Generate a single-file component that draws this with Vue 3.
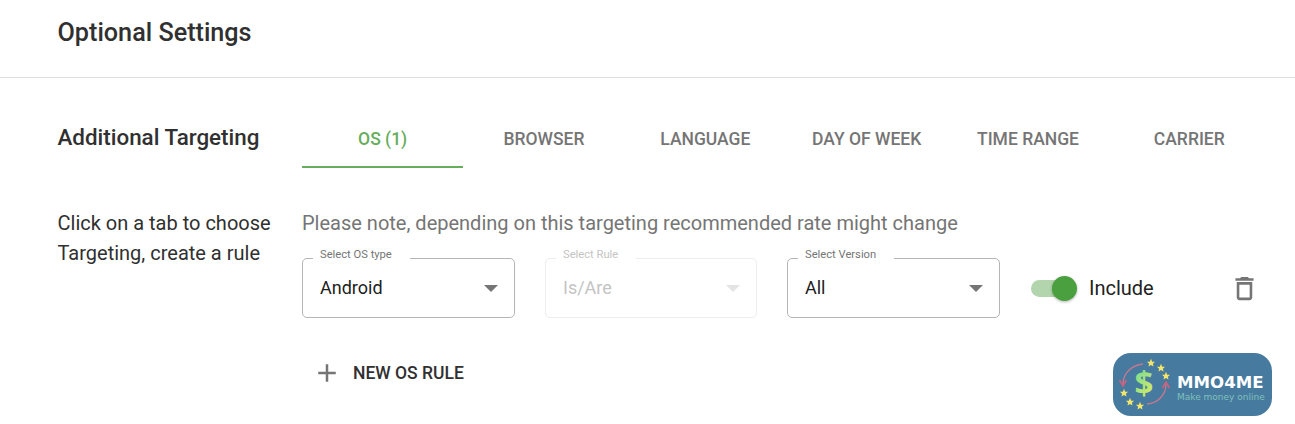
<script setup>
const tabs = ['OS (1)', 'BROWSER', 'LANGUAGE', 'DAY OF WEEK', 'TIME RANGE', 'CARRIER']
const stars = [
  [38, 10], [48, 15], [53, 23], [11, 40], [17, 49], [27, 53]
]
const starPath = 'M0 -4.2 L1.2 -1.3 L4.1 -1.2 L1.9 0.8 L2.5 3.6 L0 2.1 L-2.5 3.6 L-1.9 0.8 L-4.1 -1.2 L-1.2 -1.3 Z'
</script>

<template>
  <div class="page">
    <header class="head"><h2>Optional Settings</h2></header>
    <section class="body">
      <div class="row-top">
        <h3 class="side-title">Additional Targeting</h3>
        <nav class="tabs">
          <div v-for="(t, i) in tabs" :key="t" class="tab" :class="{ active: i === 0 }">{{ t }}</div>
        </nav>
      </div>
      <div class="row-main">
        <p class="side-text">Click on a tab to choose Targeting, create a rule</p>
        <div class="content">
          <p class="note">Please note, depending on this targeting recommended rate might change</p>
          <div class="rule">
            <div class="field">
              <span class="legend">Select OS type</span>
              <span class="value">Android</span>
              <span class="caret"></span>
            </div>
            <div class="field disabled">
              <span class="legend">Select Rule</span>
              <span class="value">Is/Are</span>
              <span class="caret"></span>
            </div>
            <div class="field">
              <span class="legend">Select Version</span>
              <span class="value">All</span>
              <span class="caret"></span>
            </div>
            <div class="switch-wrap">
              <span class="switch"><span class="track"></span><span class="thumb"></span></span>
              <span class="switch-label">Include</span>
            </div>
            <svg class="trash" viewBox="0 0 24 24" fill="#757575">
              <path d="M6 19c0 1.1.9 2 2 2h8c1.1 0 2-.9 2-2V7H6v12zM8 9h8v10H8V9zm7.5-5l-1-1h-5l-1 1H5v2h14V4h-3.5z" />
            </svg>
          </div>
          <button class="add" type="button">
            <svg width="30" height="30" viewBox="0 0 24 24" fill="#757575">
              <path d="M19 13h-6v6h-2v-6H5v-2h6V5h2v6h6v2z" />
            </svg>
            <span>NEW OS RULE</span>
          </button>
        </div>
      </div>
    </section>

    <div class="logo">
      <svg class="logo-mark" width="64" height="63" viewBox="0 0 64 63">
        <defs>
          <linearGradient id="dollar" x1="0" y1="0" x2="0.5" y2="1">
            <stop offset="0" stop-color="#62d9a4" />
            <stop offset="1" stop-color="#d8ea62" />
          </linearGradient>
        </defs>
        <path d="M30 11 C19 12 10 20 10 31" fill="none" stroke="#c4788f" stroke-width="1.4" />
        <path d="M6.500 27 L10 33 L13.500 27" fill="none" stroke="#d0607c" stroke-width="1.6" />
        <path d="M34 51 C45 50 53 42 53 31" fill="none" stroke="#c4788f" stroke-width="1.4" />
        <path d="M49.500 35 L53 29 L56.500 35" fill="none" stroke="#d0607c" stroke-width="1.6" />
        <g v-for="s in stars" :key="s[0]" :transform="`translate(${s[0]} ${s[1]})`">
          <path :d="starPath" fill="#f2e56b" />
        </g>
        <text x="31" y="42" class="dollar" fill="url(#dollar)">$</text>
      </svg>
      <div class="logo-text">
        <div class="logo-name">MMO4ME</div>
        <div class="logo-sub">Make money online</div>
      </div>
    </div>
  </div>
</template>

<style scoped>
.page {
  position: relative;
  width: 1295px;
  height: 424px;
  background: #fff;
  color: #212121;
  font-family: Roboto, "Liberation Sans", sans-serif;
  overflow: hidden;
}
.head {
  height: 77px;
  padding: 0 57.5px;
  display: flex;
  align-items: center;
  border-bottom: 1px solid #e0e0e0;
  box-sizing: content-box;
}
.head h2 {
  margin: -13px 0 0;
  font-size: 25.2px;
  font-weight: 500;
  color: #303030;
}
.body {
  padding: 0 24px 0 57.5px;
}
.row-top {
  display: flex;
  margin-top: 40px;
}
.side-title {
  width: 244.5px;
  flex: none;
  margin: 0;
  font-size: 22.4px;
  font-weight: 500;
  line-height: 38px;
  color: #303030;
}
.tabs {
  display: flex;
  width: 968px;
}
.tab {
  flex: 1;
  height: 50px;
  box-sizing: border-box;
  padding-top: 11px;
  text-align: center;
  font-size: 17.5px;
  line-height: 20px;
  font-weight: 500;
  color: #757575;
}
.tab.active {
  color: #66ad5c;
  border-bottom: 2px solid #66ad5c;
}
.row-main {
  display: flex;
  margin-top: 40px;
}
.side-text {
  width: 244.5px;
  flex: none;
  margin: 0;
  font-size: 20px;
  line-height: 30px;
  padding-right: 20px;
  box-sizing: border-box;
  color: #303030;
}
.content {
  flex: 1;
}
.note {
  margin: 0;
  font-size: 20px;
  line-height: 30px;
  color: #757575;
}
.rule {
  display: flex;
  align-items: center;
  margin-top: 20px;
}
.field {
  position: relative;
  width: 213px;
  height: 60px;
  box-sizing: border-box;
  margin-right: 30px;
  padding-left: 17px;
  border: 1px solid #b5b5b5;
  border-radius: 5px;
  display: flex;
  align-items: center;
}
.field:nth-child(2) {
  width: 212px;
}
.legend {
  position: absolute;
  left: 10px;
  top: -11px;
  height: 14px;
  padding: 0 18px 0 7px;
  background: linear-gradient(#fff 11px, transparent 11px);
  font-size: 11.2px;
  line-height: 14px;
  color: #757575;
}
.value {
  font-size: 18px;
  margin-top: -1px;
  color: #212121;
}
.caret {
  position: absolute;
  right: 16px;
  top: 26px;
  border-left: 7px solid transparent;
  border-right: 7px solid transparent;
  border-top: 7px solid #757575;
}
.field.disabled {
  border-color: #ededed;
}
.field.disabled .legend,
.field.disabled .value {
  color: #c4c4c4;
}
.field.disabled .caret {
  border-top-color: #e4e4e4;
}
.switch-wrap {
  display: flex;
  align-items: center;
  margin-left: 1px;
}
.switch {
  position: relative;
  width: 46px;
  height: 26px;
  margin-right: 12px;
}
.track {
  position: absolute;
  left: 0;
  top: 5px;
  width: 44px;
  height: 17px;
  border-radius: 9px;
  background: #b2d5ae;
}
.thumb {
  position: absolute;
  left: 21px;
  top: 1px;
  width: 25px;
  height: 25px;
  border-radius: 50%;
  background: #4aa03f;
  box-shadow: 0 1px 3px rgba(0, 0, 0, 0.3);
}
.switch-label {
  font-size: 20px;
  color: #212121;
}
.trash {
  margin-left: auto;
  margin-right: 11px;
  width: 31px;
  height: 31px;
}
.add {
  display: flex;
  align-items: center;
  margin-top: 24px;
  margin-left: 10px;
  padding: 0;
  border: 0;
  background: none;
  font-family: inherit;
  font-size: 17.5px;
  font-weight: 500;
  color: #303030;
  height: 62px;
}
.add svg {
  margin-right: 11px;
}
.logo {
  position: absolute;
  left: 1113px;
  top: 353px;
  width: 159px;
  height: 63px;
  border-radius: 18px;
  background: #467a9e;
  display: flex;
  align-items: center;
}
.logo-mark {
  flex: none;
}
.logo-text {
  margin-left: 0;
  margin-top: 11px;
  font-family: "DejaVu Sans", sans-serif;
}
.logo-name {
  font-size: 16.6px;
  font-weight: 700;
  line-height: 15px;
  color: #fff;
}
.logo-sub {
  font-size: 9px;
  line-height: 15px;
  color: #7fc0bc;
}
.dollar {
  font-family: "Open Sans", sans-serif;
  font-size: 33px;
  font-weight: 700;
  text-anchor: middle;
}
</style>
